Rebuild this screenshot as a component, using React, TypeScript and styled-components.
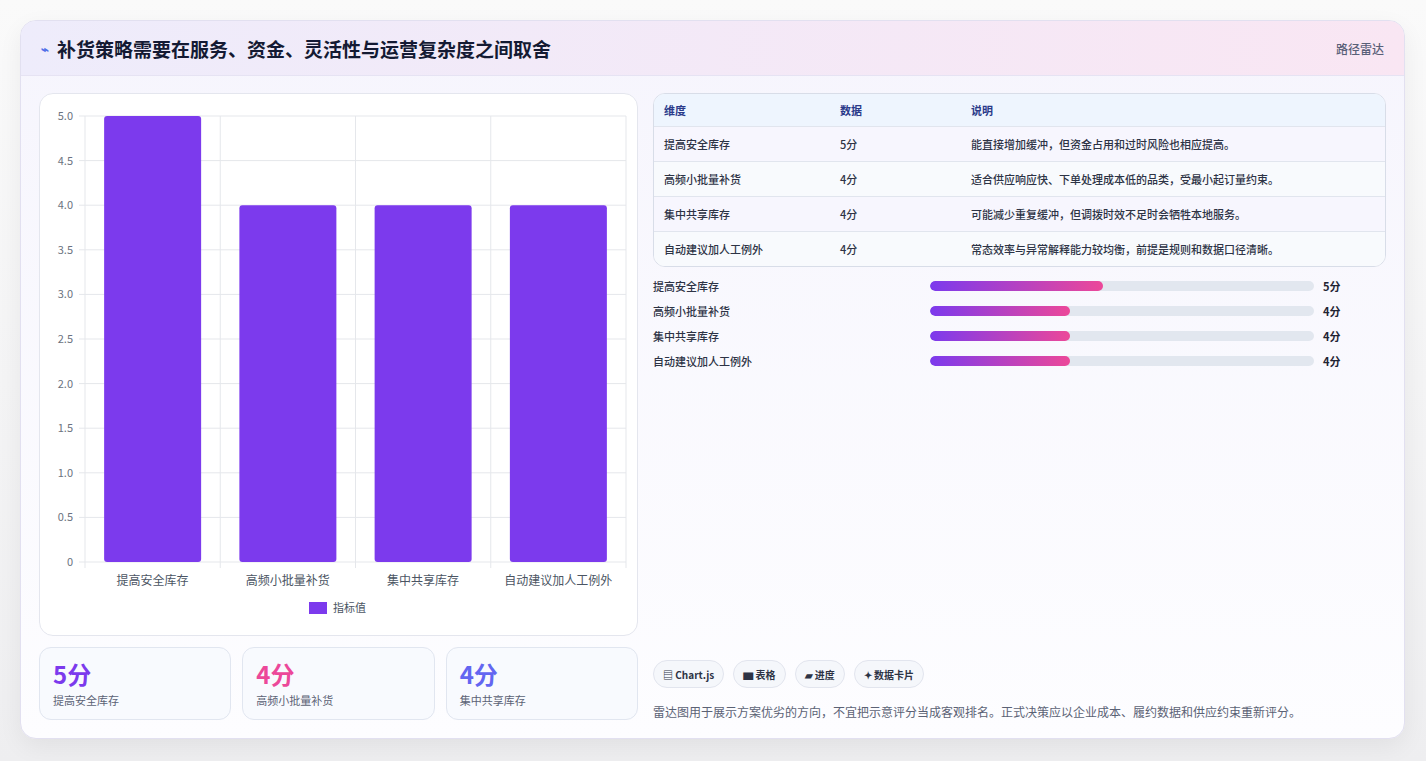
import React from "react";
import styled, { createGlobalStyle } from "styled-components";

const G = createGlobalStyle`
  body { margin: 0; background: #f3f4f6; font-family: "Noto Sans CJK SC", "Noto Sans", sans-serif; }
`;
const Page = styled.div`width:1426px;height:761px;padding:20px;box-sizing:border-box;background:linear-gradient(#fafafa,#eeeef0);`;
const Card = styled.div`width:1385px;height:719px;box-sizing:border-box;border:1px solid #e2e0f0;border-radius:16px;background:linear-gradient(#f6f5fd,#fdfdff);box-shadow:0 8px 24px rgba(0,0,0,.06);overflow:hidden;display:flex;flex-direction:column;`;
const Header = styled.div`height:54px;flex:none;display:flex;align-items:center;justify-content:space-between;padding:0 20px 0 20px;background:linear-gradient(90deg,#eeecfb,#f9e6f3);border-bottom:1px solid #e6e3f3;`;
const Title = styled.h1`margin:0;font-size:19px;font-weight:700;color:#141a33;display:flex;align-items:center;gap:8px;`;
const Tag = styled.span`font-size:12px;color:#596078;font-weight:500;`;
const Body = styled.div`flex:1;display:flex;gap:15px;padding:17px 18px 18px 18px;min-height:0;`;
const Left = styled.div`width:599px;display:flex;flex-direction:column;gap:11px;`;
const ChartCard = styled.div`height:543px;box-sizing:border-box;background:#fff;border:1px solid #e4e6ee;border-radius:14px;`;
const Stats = styled.div`display:grid;grid-template-columns:repeat(3,1fr);gap:11px;`;
const Stat = styled.div`height:73px;box-sizing:border-box;border:1px solid #e1e6f0;border-radius:12px;background:#f8fafe;padding:10px 13px;`;
const Big = styled.div<{ c: string }>`font-size:24px;font-weight:700;color:${p => p.c};line-height:32px;`;
const Small = styled.div`font-size:11px;color:#5b6275;margin-top:2px;`;
const Right = styled.div`flex:1;display:flex;flex-direction:column;`;
const Table = styled.div`border:1px solid #d8dde8;border-radius:12px;overflow:hidden;background:#fff;`;
const Row = styled.div<{ head?: boolean; alt?: boolean }>`display:grid;grid-template-columns:176px 131px 1fr;height:${p => p.head ? 32 : 34}px;align-items:center;padding:0 10px;font-size:11px;
  color:${p => p.head ? "#2a3a8a" : "#2d3345"};font-weight:${p => p.head ? 600 : 500};
  background:${p => p.head ? "#eef5fe" : p.alt ? "#f8fafd" : "#f7f6fe"};border-top:${p => p.head ? "none" : "1px solid #e1e5ee"};`;
const Bars = styled.div`display:flex;flex-direction:column;gap:8px;margin-top:10px;`;
const BarRow = styled.div`display:grid;grid-template-columns:277px 384px 40px;gap:0;align-items:center;height:17px;font-size:11px;color:#2d3345;font-weight:500;`;
const Track = styled.div`height:10px;border-radius:5px;background:#e2e7ef;overflow:hidden;`;
const Fill = styled.div`height:100%;border-radius:5px;background:linear-gradient(90deg,#7c3aed,#ec4899);`;
const Val = styled.span`padding-left:9px;font-weight:700;color:#1f2433;`;
const Spacer = styled.div`flex:1;`;
const Chips = styled.div`display:flex;gap:9px;`;
const Chip = styled.span`height:28px;box-sizing:border-box;padding:0 9px;border:1px solid #e2e5ee;border-radius:14px;background:#f5f7fb;font-size:10px;font-weight:600;color:#2d3345;display:flex;align-items:center;gap:3px;`;
const Note = styled.p`margin:15px 0 0 0;font-size:12px;color:#5b6275;`;

const cats = ["提高安全库存", "高频小批量补货", "集中共享库存", "自动建议加人工例外"];
const vals = [5, 4, 4, 4];
const desc = ["能直接增加缓冲，但资金占用和过时风险也相应提高。", "适合供应响应快、下单处理成本低的品类，受最小起订量约束。", "可能减少重复缓冲，但调拨时效不足时会牺牲本地服务。", "常态效率与异常解释能力较均衡，前提是规则和数据口径清晰。"];

function Chart() {
  const x0 = 45, x1 = 586, y0 = 22, y1 = 468;
  const ticks = ["0", "0.5", "1.0", "1.5", "2.0", "2.5", "3.0", "3.5", "4.0", "4.5", "5.0"];
  const cw = (x1 - x0) / 4;
  return (
    <svg width="597" height="541" style={{ display: "block", fontFamily: "Noto Sans CJK SC, sans-serif" }}>
      {ticks.map((t, i) => {
        const y = y1 - (i * (y1 - y0)) / 10;
        return <g key={t}><line x1={x0 - 6} x2={x1} y1={y} y2={y} stroke="#e5e7eb" /><text x={x0 - 12} y={y + 4} fontSize="11" fill="#6b7280" textAnchor="end">{t}</text></g>;
      })}
      {[0, 1, 2, 3, 4].map(i => <line key={i} x1={x0 + i * cw} x2={x0 + i * cw} y1={y0} y2={y1 + 6} stroke="#e5e7eb" />)}
      {vals.map((v, i) => {
        const h = (v / 5) * (y1 - y0);
        const cx = x0 + cw * i + cw / 2;
        return <g key={i}><rect x={cx - 48.5} y={y1 - h} width="97" height={h} rx="3" fill="#7c3aed" />
          <text x={cx} y={y1 + 23} fontSize="12" fill="#4b5563" textAnchor="middle">{cats[i]}</text></g>;
      })}
      <rect x="269" y="508" width="18" height="12" fill="#7c3aed" />
      <text x="293" y="518" fontSize="11" fill="#4b5563">指标值</text>
    </svg>
  );
}

export default function App() {
  return (
    <Page>
      <G />
      <Card>
        <Header>
          <Title><span style={{ color: "#4f6ee8", fontSize: 13 }}>⌁</span>补货策略需要在服务、资金、灵活性与运营复杂度之间取舍</Title>
          <Tag>路径雷达</Tag>
        </Header>
        <Body>
          <Left>
            <ChartCard><Chart /></ChartCard>
            <Stats>
              <Stat><Big c="#7c3aed">5分</Big><Small>提高安全库存</Small></Stat>
              <Stat><Big c="#ec4899">4分</Big><Small>高频小批量补货</Small></Stat>
              <Stat><Big c="#6366f1">4分</Big><Small>集中共享库存</Small></Stat>
            </Stats>
          </Left>
          <Right>
            <Table>
              <Row head><span>维度</span><span>数据</span><span>说明</span></Row>
              {cats.map((c, i) => <Row key={c} alt={i % 2 === 1}><span>{c}</span><span>{vals[i]}分</span><span>{desc[i]}</span></Row>)}
            </Table>
            <Bars>
              {cats.map((c, i) => <BarRow key={c}><span>{c}</span><Track><Fill style={{ width: vals[i] === 5 ? "45%" : "36.5%" }} /></Track><Val>{vals[i]}分</Val></BarRow>)}
            </Bars>
            <Spacer />
            <Chips>
              <Chip>▤ Chart.js</Chip><Chip>▆ 表格</Chip><Chip>▰ 进度</Chip><Chip>✦ 数据卡片</Chip>
            </Chips>
            <Note>雷达图用于展示方案优劣的方向，不宜把示意评分当成客观排名。正式决策应以企业成本、履约数据和供应约束重新评分。</Note>
          </Right>
        </Body>
      </Card>
    </Page>
  );
}
